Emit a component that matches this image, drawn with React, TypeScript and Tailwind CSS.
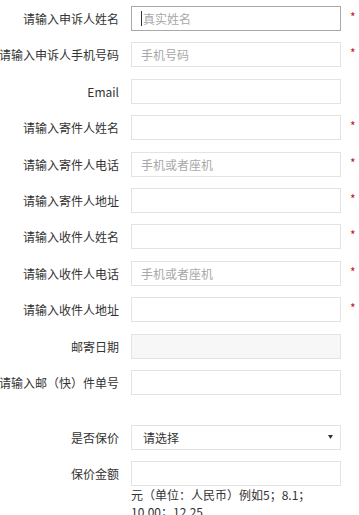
import React from "react";

type Row = {
  label: string;
  placeholder?: string;
  required?: boolean;
  focused?: boolean;
  disabled?: boolean;
};

const rows: Row[] = [
  { label: "请输入申诉人姓名", placeholder: "真实姓名", required: true, focused: true },
  { label: "请输入申诉人手机号码", placeholder: "手机号码", required: true },
  { label: "Email" },
  { label: "请输入寄件人姓名", required: true },
  { label: "请输入寄件人电话", placeholder: "手机或者座机", required: true },
  { label: "请输入寄件人地址", required: true },
  { label: "请输入收件人姓名", required: true },
  { label: "请输入收件人电话", placeholder: "手机或者座机", required: true },
  { label: "请输入收件人地址", required: true },
  { label: "邮寄日期", disabled: true },
  { label: "请输入邮（快）件单号" },
];

function Star({ show }: { show?: boolean }) {
  return (
    <span className="ml-[9px] w-[10px] self-start pt-[4px] text-[12px] leading-[14px] text-[#b22] ">
      {show ? "*" : ""}
    </span>
  );
}

export default function App() {
  return (
    <div
      className="w-[359px] h-[515px] overflow-hidden bg-white text-[#333] text-[12px]"
      style={{ fontFamily: '"Noto Sans CJK SC", "Microsoft YaHei", sans-serif' }}
    >
      <div className="flex flex-col pt-[6px]">
        {rows.map((r, i) => (
          <div key={i} className="flex items-center h-[25px] mb-[11.4px]">
            <div className="w-[119px] shrink-0 text-right whitespace-nowrap leading-[25px] overflow-visible flex justify-end">
              <span className="whitespace-nowrap">{r.label}</span>
            </div>
            <div
              className={
                "ml-[12px] w-[210px] h-[25px] shrink-0 border flex items-center pl-[9px] " +
                (r.focused
                  ? "border-[#a9a9a9] bg-white"
                  : r.disabled
                  ? "border-[#e3e3e3] bg-[#f7f7f7]"
                  : "border-[#e3e3e3] bg-white")
              }
            >
              {r.focused && <span className="w-px h-[15px] bg-[#333] mr-[1px]" />}
              {r.placeholder && (
                <span className="text-[#a8a8a8] leading-[23px]">{r.placeholder}</span>
              )}
            </div>
            <Star show={r.required} />
          </div>
        ))}

        <div className="flex items-center h-[25px] mt-[18.6px] mb-[11.4px]">
          <div className="w-[119px] shrink-0 text-right leading-[25px]">是否保价</div>
          <div className="ml-[12px] w-[210px] h-[25px] shrink-0 border border-[#e3e3e3] bg-white flex items-center justify-between pl-[11px] pr-[7px]">
            <span className="leading-[23px] text-[#333]">请选择</span>
            <svg width="5" height="4" viewBox="0 0 5 4">
              <polygon points="0,0 5,0 2.5,4" fill="#333" />
            </svg>
          </div>
        </div>

        <div className="flex items-start">
          <div className="w-[119px] shrink-0 text-right leading-[25px]">保价金额</div>
          <div className="ml-[12px] w-[210px] shrink-0 flex flex-col">
            <div className="h-[25px] border border-[#e3e3e3] bg-white" />
            <div className="leading-[17px] text-[#333]">元（单位：人民币）例如5；8.1；10.00；12.25</div>
          </div>
        </div>
      </div>
    </div>
  );
}
